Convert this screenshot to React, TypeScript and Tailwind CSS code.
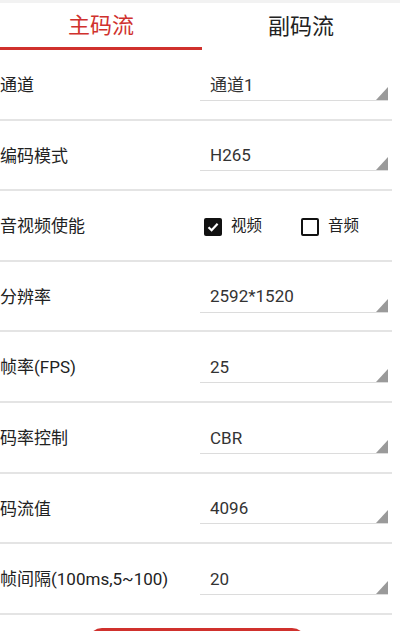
import { useState } from 'react'

const rows = [
  { label: '通道', value: '通道1' },
  { label: '编码模式', value: 'H265' },
  { label: '音视频使能', value: null },
  { label: '分辨率', value: '2592*1520' },
  { label: '帧率(FPS)', value: '25' },
  { label: '码率控制', value: 'CBR' },
  { label: '码流值', value: '4096' },
  { label: '帧间隔(100ms,5~100)', value: '20' },
]

function Spinner({ value }: { value: string }) {
  return (
    <div className="relative flex h-[30px] w-[188px] items-center border-b-[1.5px] border-[#dcdcdc] pl-[10px] text-[17px] text-[#333]">
      {value}
      {/* triangle in the corner */}
      <svg className="absolute bottom-0 right-0" width="12" height="13" viewBox="0 0 12 13">
        <polygon points="12,0 12,13 0,13" fill="#9a9a9a" />
      </svg>
    </div>
  )
}

function Check({ checked, label }: { checked: boolean; label: string }) {
  return (
    <div className="flex items-center gap-[9px]">
      {checked ? (
        <span className="flex h-[18px] w-[18px] items-center justify-center rounded-[2px] bg-[#111]">
          <svg width="14" height="14" viewBox="0 0 14 14">
            <path d="M2.5 7.2 L5.6 10.2 L11.6 3.8" fill="none" stroke="#fff" strokeWidth="2.2" />
          </svg>
        </span>
      ) : (
        <span className="h-[18px] w-[18px] rounded-[2px] border-2 border-[#111]" />
      )}
      <span className="text-[15.5px] text-[#222]">{label}</span>
    </div>
  )
}

export default function App() {
  const [tab, setTab] = useState(0)

  return (
    <div className="h-[631px] w-[400px] overflow-hidden bg-white font-['Roboto','Noto_Sans_CJK_SC',sans-serif]">
      {/* Tabs */}
      <div className="flex h-[50px] border-t-[3px] border-[#f2f2f2]">
        <button
          onClick={() => setTab(0)}
          className={`flex w-[202px] items-center justify-center text-[22px] ${
            tab === 0 ? 'border-b-[3px] border-[#d0312d] text-[#d0312d]' : 'text-[#222]'
          }`}
        >
          主码流
        </button>
        <button
          onClick={() => setTab(1)}
          className={`flex w-[198px] items-center justify-center text-[22px] ${
            tab === 1 ? 'border-b-[3px] border-[#d0312d] text-[#d0312d]' : 'text-[#222]'
          }`}
        >
          副码流
        </button>
      </div>

      {/* Settings list */}
      <div className="pr-2">
        {rows.map((row) => (
          <div
            key={row.label}
            className="flex h-[70.6px] items-center border-b-2 border-[#e4e4e4] pt-[3px]"
          >
            <div className="w-[200px] text-[17px] text-[#222]">{row.label}</div>
            {row.value === null ? (
              <div className="flex items-center gap-[39px] pl-[4px]">
                <Check checked label="视频" />
                <Check checked={false} label="音频" />
              </div>
            ) : (
              <Spinner value={row.value} />
            )}
          </div>
        ))}
      </div>

      {/* Bottom button, cut off by the window */}
      <div className="mt-[13px] flex justify-center pr-[7px]">
        <button className="h-[44px] w-[218px] rounded-[14px] bg-[#d0312d]" />
      </div>
    </div>
  )
}
